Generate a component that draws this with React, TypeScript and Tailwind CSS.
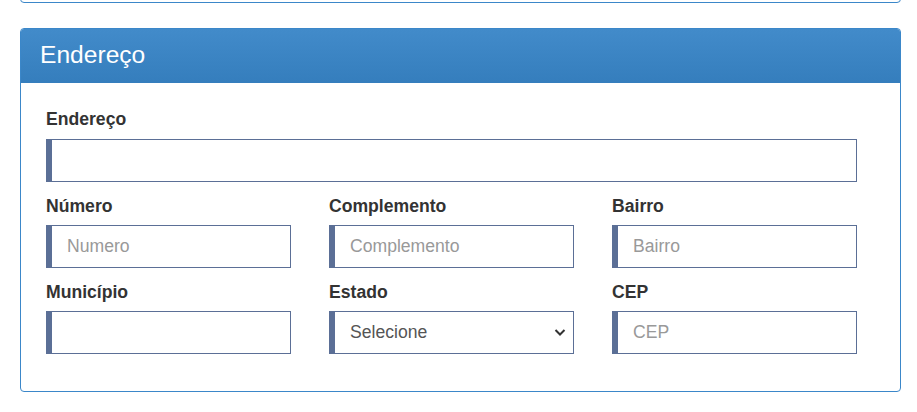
import React from "react";

const inputCls =
  "w-full h-[43px] border border-[#5b6f96] border-l-[6px] bg-white pl-[15px] pr-3 text-[17.6px] text-[#555] placeholder:text-[#999] outline-none";

const labelCls = "text-[17.6px] font-bold text-[#333] leading-[20px] mb-[9px]";

function Field({ label, placeholder }: { label: string; placeholder?: string }) {
  return (
    <div className="flex flex-col">
      <label className={labelCls}>{label}</label>
      <input className={inputCls} placeholder={placeholder} />
    </div>
  );
}

export default function App() {
  return (
    <div
      className="w-[917px] h-[412px] bg-white overflow-hidden"
      style={{ fontFamily: '"Liberation Sans", Arial, sans-serif' }}
    >
      <div className="ml-[20px] mr-[16px] mt-[-20px] h-[23px] border border-[#3b87c9] rounded-[4px]" />
      <div className="ml-[20px] mr-[16px] mt-[25px] border border-[#3b87c9] rounded-[4px] overflow-hidden">
        <div className="h-[54px] bg-gradient-to-b from-[#428bca] to-[#357ebd] flex items-center px-[19px] border-b border-[#357ebd]">
          <h3 className="text-white text-[24.6px] leading-none">Endereço</h3>
        </div>
        <div className="pl-[25px] pr-[43px] pt-[26px] pb-[37px] flex flex-col gap-[14px]">
          <div className="flex flex-col">
            <label className="text-[17.6px] font-bold text-[#333] leading-[20px] mb-[10px]">Endereço</label>
            <input className={inputCls} />
          </div>
          <div className="grid grid-cols-3 gap-x-[38px] gap-y-[14px]">
            <Field label="Número" placeholder="Numero" />
            <Field label="Complemento" placeholder="Complemento" />
            <Field label="Bairro" placeholder="Bairro" />
            <Field label="Município" />
            <div className="flex flex-col">
              <label className={labelCls}>Estado</label>
              <div className="relative">
                <select className="w-full h-[43px] border border-[#5b6f96] border-l-[6px] bg-white pl-[15px] pr-3 text-[17.6px] text-[#555] appearance-none outline-none">
                  <option>Selecione</option>
                </select>
                <svg
                  className="absolute right-[8px] top-[17px] pointer-events-none"
                  width="12"
                  height="10"
                  viewBox="0 0 12 10"
                >
                  <path d="M1.5 2 L6 6.5 L10.5 2" fill="none" stroke="#333" strokeWidth="2" />
                </svg>
              </div>
            </div>
            <Field label="CEP" placeholder="CEP" />
          </div>
        </div>
      </div>
    </div>
  );
}
